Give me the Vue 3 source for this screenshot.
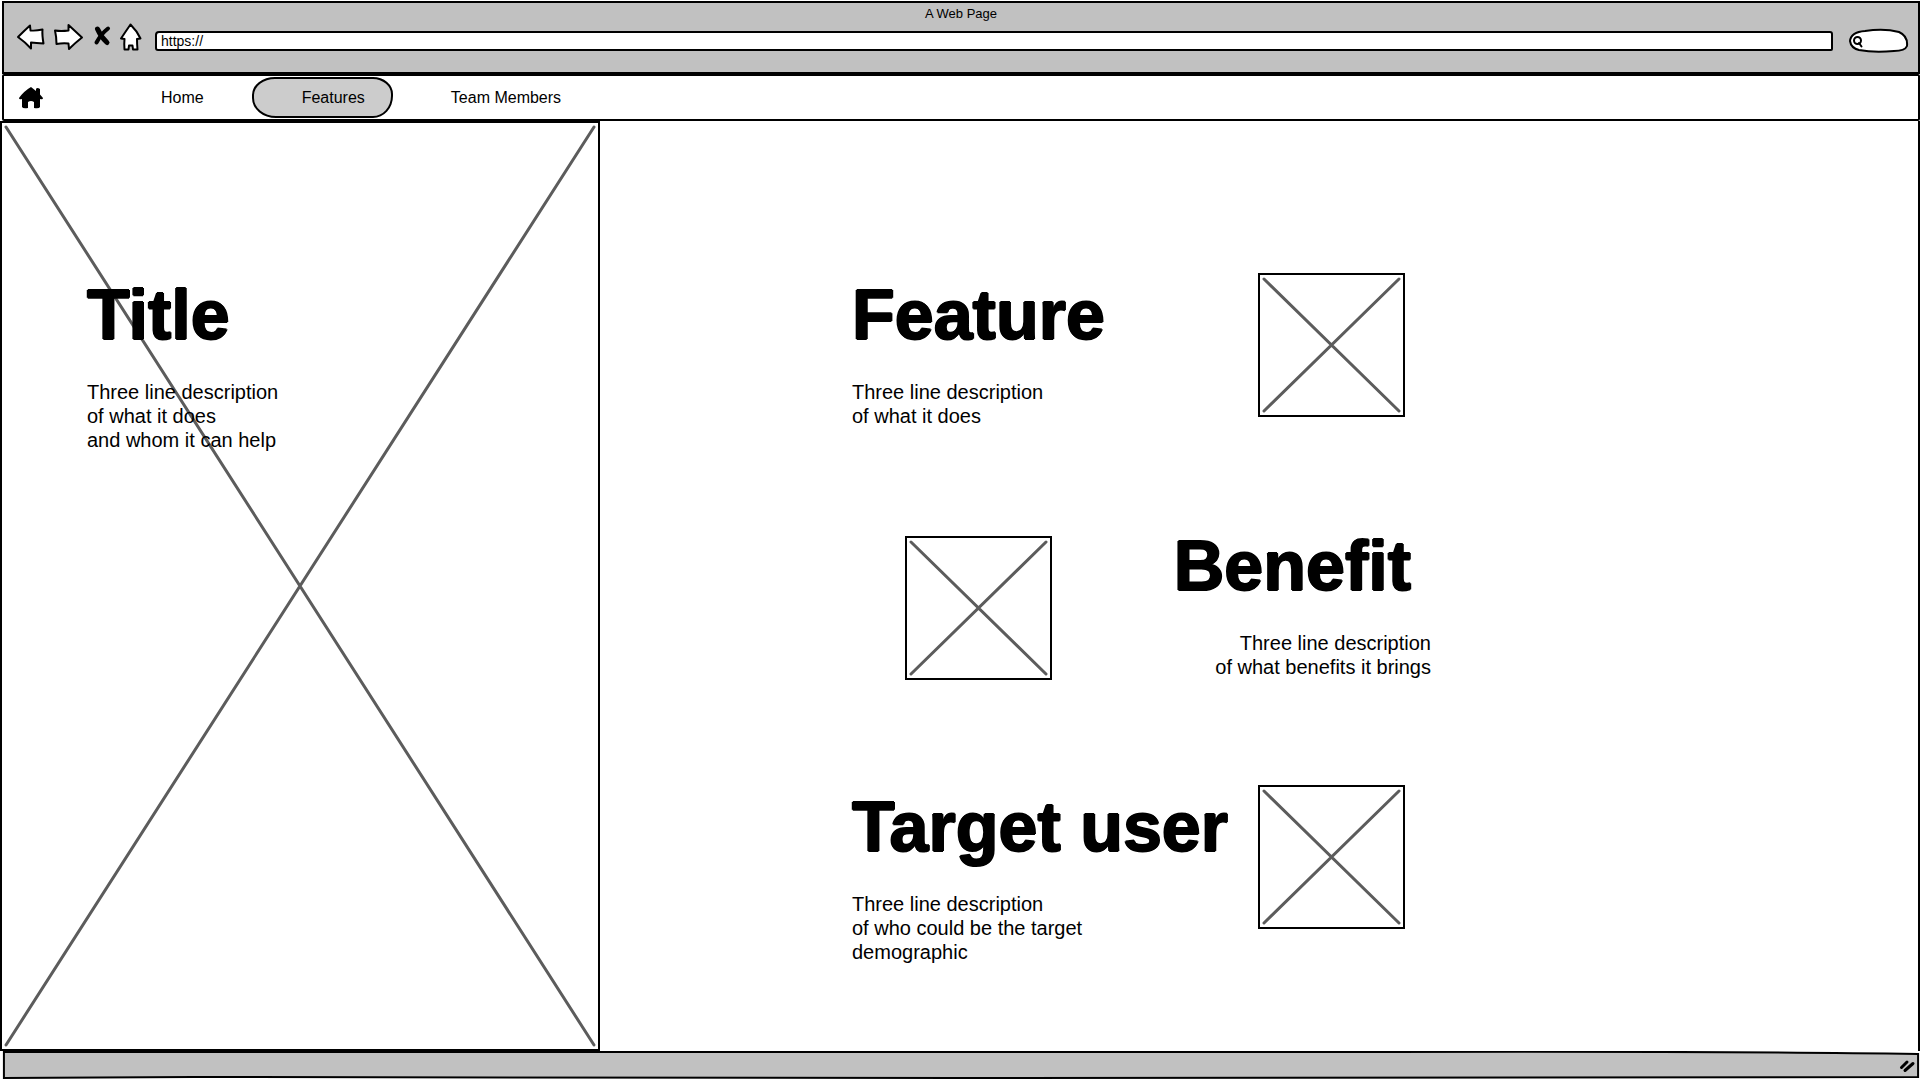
<script setup>
import { ref } from 'vue'

const address = ref('https://')
const query = ref('')
const features = [
  { title: 'Feature', lines: ['Three line description', 'of what it does'] },
  { title: 'Benefit', lines: ['Three line description', 'of what benefits it brings'], flipped: true },
  { title: 'Target user', lines: ['Three line description', 'of who could be the target', 'demographic'] },
]
</script>

<template>
  <div class="window">
    <header class="chrome">
      <div class="window-title">A Web Page</div>
      <div class="toolbar">
        <button class="tool back" aria-label="Back">
          <svg width="29" height="28" viewBox="0 0 29 28"><path d="M2 14Q9 7 14 2.500L14.500 7.500Q20 8 26.500 6.500 26 12 27.500 20.500 20 20 15 19.500L15 25.500Q9 19 2 14Z" /></svg>
        </button>
        <button class="tool forward" aria-label="Forward">
          <svg width="31" height="28" viewBox="0 0 31 28"><path d="M2 7.500Q8 8.500 15.500 7.500V2Q22 8 29 14.500 22 20 16 26L15.500 20.500Q9 20 3.500 21 3.500 14 2 7.500Z" /></svg>
        </button>
        <button class="tool stop" aria-label="Stop">
          <svg width="18" height="22" viewBox="0 0 18 22"><path class="cross-a" d="M4.500 4Q8 12 14 17.500" /><path class="cross-b" d="M15 3.500Q8 9 3.500 17.500" /></svg>
        </button>
        <button class="tool home" aria-label="Home page">
          <svg width="23" height="29" viewBox="0 0 23 29"><path d="M11.500 1.500Q7 8 2 15.500L5.500 16Q5 21 5.500 26.500H9.500L10 22.500H13.500L14 26.500H18.500Q18 21 18 16L21.500 15.500Q18 8 11.500 1.500Z" /></svg>
        </button>
        <input v-model="address" class="address" type="text" aria-label="Address" />
        <label class="search">
          <svg width="61" height="26" viewBox="0 0 61 26">
            <path class="pill" d="M11 22Q3 20 2 13 3 4 17 3 36 0 51 4 60 8 59 18 57 23 46 23 26 25 11 22Z" />
            <circle class="lens" cx="9.500" cy="12.500" r="3.500" />
            <path class="lens" d="M11 15 13.500 18.500" />
          </svg>
          <input v-model="query" type="text" aria-label="Search" />
        </label>
      </div>
    </header>

    <nav class="nav">
      <a class="brand" href="#" aria-label="Start">
        <svg width="24" height="22" viewBox="0 0 24 22"><path d="M12 0 17 4V2Q18 0 21 2V7.500L24 11Q24 13 21 12V20Q20 22 15 21V15Q12 13 9 15V21Q4 22 3 20V12Q0 13 0 11Q5 4 12 0Z" /></svg>
      </a>
      <a class="link" href="#home">Home</a>
      <a class="link active" href="#features">Features</a>
      <a class="link" href="#team">Team Members</a>
    </nav>

    <main class="main">
      <section class="hero">
        <svg class="cross" viewBox="0 0 100 100" preserveAspectRatio="none"><path d="M0 0 100 100M100 0 0 100" /></svg>
        <div class="copy">
          <h1>Title</h1>
          <p>Three line description<br />of what it does<br />and whom it can help</p>
        </div>
      </section>

      <section class="features">
        <article v-for="item in features" :key="item.title" class="feature" :class="{ flipped: item.flipped }">
          <div class="copy">
            <h2>{{ item.title }}</h2>
            <p><template v-for="(line, i) in item.lines" :key="line"><br v-if="i" />{{ line }}</template></p>
          </div>
          <div class="picture">
            <svg class="cross" viewBox="0 0 100 100" preserveAspectRatio="none"><path d="M0 0 100 100M100 0 0 100" /></svg>
          </div>
        </article>
      </section>
    </main>

    <footer class="status">
      <svg class="edge" viewBox="0 0 1000 28" preserveAspectRatio="none"><path d="M1 1H700Q900 0 999 3V26Q700 28 500 27 200 25 100 26L1 27Z" /></svg>
      <svg class="grip" width="17" height="14" viewBox="0 0 17 14"><path d="M2.500 8.500 8 3M6 11.500 14 4.500" /></svg>
    </footer>
  </div>
</template>

<style>
body {
  margin: 0;
  background: #fff;
}
</style>

<style scoped>
.window {
  box-sizing: border-box;
  display: flex;
  flex-direction: column;
  min-height: 100vh;
  padding: 1px 1px 1px 0;
  color: #000;
  font-family: "Liberation Sans", Arial, sans-serif;
}

.chrome {
  box-sizing: border-box;
  height: 73px;
  margin-left: 2px;
  border: 2px solid #000;
  background: #c1c1c1;
}

.window-title {
  height: 21px;
  font-size: 13px;
  line-height: 21px;
  text-align: center;
}

.toolbar {
  display: flex;
  align-items: flex-start;
  padding: 0 9px 0 12px;
}

.tool {
  display: block;
  margin-top: -1px;
  padding: 0;
  border: 0;
  background: none;
}

.tool svg,
.search svg,
.brand svg {
  display: block;
}

.tool path,
.pill {
  fill: #fff;
  stroke: #000;
  stroke-width: 2;
  stroke-linejoin: round;
}

.forward {
  margin-left: 8px;
}

.stop {
  margin: 1px 8px 0 9px;
}

.stop path {
  fill: none;
  stroke-width: 5;
  stroke-linecap: round;
}

.stop .cross-b {
  stroke-width: 4;
}

.address {
  box-sizing: border-box;
  flex: 1;
  min-width: 0;
  height: 20px;
  margin: 7px 15px 0 13px;
  padding: 0 4px;
  border: 2px solid #000;
  border-radius: 4px 3px 2px 3px;
  background: #fff;
  color: #000;
  font: 14px/16px "Liberation Sans", Arial, sans-serif;
  outline: none;
}

.search {
  position: relative;
  margin-top: 4px;
}

.search input {
  position: absolute;
  inset: 4px 6px 4px 18px;
  width: 36px;
  padding: 0;
  border: 0;
  background: none;
  font-size: 13px;
  outline: none;
}

.lens {
  fill: none;
  stroke: #000;
  stroke-width: 2;
  stroke-linecap: round;
}

.nav {
  box-sizing: border-box;
  display: flex;
  align-items: center;
  height: 47px;
  margin-left: 2px;
  padding-left: 15px;
  border: 2px solid #000;
  border-radius: 2px;
  font-size: 16px;
}

.brand {
  margin-right: 68px;
}

.link {
  box-sizing: border-box;
  height: 41px;
  padding: 0 28px 0 50px;
  color: #000;
  line-height: 41px;
  text-decoration: none;
}

.active {
  margin: 0 8px 0 20px;
  padding: 0 26px 0 48px;
  border: 2px solid #000;
  border-radius: 23px 20px 20px 24px / 18px 17px 22px 20px;
  background: #ccc;
  line-height: 37px;
}

.main {
  display: flex;
  flex: 1;
}

.hero {
  position: relative;
  box-sizing: border-box;
  width: 600px;
  flex: 0 1 600px;
  padding: 150px 20px 20px 85px;
  border: 2px solid #000;
}

.cross {
  position: absolute;
  top: 4px;
  left: 4px;
  width: calc(100% - 8px);
  height: calc(100% - 8px);
  overflow: visible;
}

.cross path {
  fill: none;
  stroke: #5c5c5c;
  stroke-width: 3;
  stroke-linecap: round;
  vector-effect: non-scaling-stroke;
}

.copy {
  position: relative;
}

h1,
h2 {
  margin: 0 0 23px;
  font-size: 70px;
  font-weight: 700;
  line-height: 84px;
  white-space: nowrap;
  /* a ring of solid shadows rounds the corners of the strokes */
  text-shadow: 1px 0 #000, -1px 0 #000, 0 1px #000, 0 -1px #000;
}

p {
  margin: 0;
  font-size: 20px;
  line-height: 24px;
  white-space: nowrap;
}

.features {
  box-sizing: border-box;
  display: flex;
  flex: 1;
  flex-direction: column;
  padding: 152px 20px 40px 252px;
  border-right: 2px solid #000;
}

.feature {
  display: flex;
  align-items: flex-start;
}

.feature .copy {
  width: 406px;
}

.picture {
  position: relative;
  box-sizing: border-box;
  width: 147px;
  height: 144px;
  border: 2px solid #000;
}

.flipped {
  flex-direction: row-reverse;
  justify-content: flex-end;
  margin: 96px 0 105px;
  padding-left: 53px;
}

.flipped .copy {
  width: 379px;
  text-align: right;
}

.flipped h2 {
  padding-right: 20px;
}

.flipped .picture {
  margin-top: 12px;
}

.status {
  position: relative;
  display: flex;
  align-items: center;
  justify-content: flex-end;
  height: 28px;
  margin-left: 2px;
}

.edge {
  position: absolute;
  inset: 0;
  width: 100%;
  height: 100%;
}

.edge path {
  fill: #c1c1c1;
  stroke: #000;
  stroke-width: 2;
  vector-effect: non-scaling-stroke;
}

.grip {
  position: relative;
  margin: 2px 4px 0 0;
}

.grip path {
  fill: none;
  stroke: #000;
  stroke-width: 3;
  stroke-linecap: round;
}
</style>
